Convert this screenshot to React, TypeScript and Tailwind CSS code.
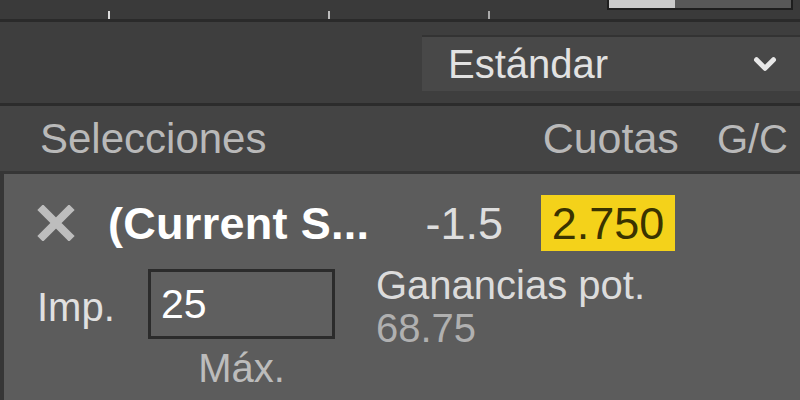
import { ChevronDown } from 'lucide-react'

// Bet slip panel, zoomed in: odds selector, header row and a single selection
export default function App() {
  return (
    <div className="flex h-[400px] w-[800px] flex-col overflow-hidden bg-[#3e3e3e] font-['Liberation_Sans',Arial,sans-serif] text-[40px] leading-none">
      {/* clipped tab strip at the very top */}
      <div className="flex h-[19px] items-end overflow-hidden bg-[#3a3a3a]">
        <div className="flex flex-1 items-end gap-[90px] pl-[30px] text-[#6a6a6a]">
          <span className="-mb-[2px] h-[10px] w-[80px] border-r-2 border-[#dcdcdc]"></span>
          <span className="-mb-[2px] h-[10px] w-[130px] border-r-2 border-[#bcbcbc]"></span>
          <span className="-mb-[2px] h-[10px] w-[70px] border-r-2 border-[#aaaaaa]"></span>
        </div>
        <div className="mr-[7px] flex h-[10px] w-[186px] self-start border-x-2 border-b-2 border-[#1e1e1e]">
          <div className="w-[66px] bg-[#cacaca]"></div>
          <div className="flex-1 bg-[#585858]"></div>
        </div>
      </div>
      <div className="h-[3px] bg-[#2a2a2a]"></div>

      {/* odds format selector */}
      <div className="flex h-[81px] items-center justify-end">
        <div className="flex h-[56px] w-[378px] items-center justify-between border-t-2 border-[#333333] bg-[#484848] pr-[18px] pl-[26px] text-[#e2e2e2]">
          <span>Estándar</span>
          <ChevronDown size={34} strokeWidth={3.5} className="text-[#e8e8e8]" />
        </div>
      </div>
      <div className="h-[3px] bg-[#2c2c2c]"></div>

      {/* column headers */}
      <div className="flex h-[65px] items-center bg-[#444444] text-[#b9b9b9]">
        <span className="pl-[40px] text-[42px]">Selecciones</span>
        <span className="ml-auto text-[43px]">Cuotas</span>
        <span className="mr-[12px] ml-[38px] text-[40px]">G/C</span>
      </div>

      {/* selection card */}
      <div className="flex flex-1 flex-col border-t-[3px] border-l-[4px] border-[#363636] bg-[#5c5c5c] pl-[33px]">
        <div className="mt-[21px] flex h-[56px] items-center">
          <svg width="38" height="36" viewBox="0 0 38 36" className="shrink-0">
            <path d="M6 5 L32 31 M32 5 L6 31" stroke="#bdbdbd" strokeWidth="8" strokeLinecap="square" />
          </svg>
          <span className="ml-[33px] text-[45px] font-bold tracking-[0.3px] text-white">(Current S...</span>
          <span className="ml-[56px] text-[45px] text-[#dedede]">-1.5</span>
          <span className="ml-[38px] flex h-[56px] w-[134px] items-center justify-center bg-[#f4d21a] text-[45px] text-[#3a3300]">
            2.750
          </span>
        </div>

        <div className="mt-[18px] flex items-start">
          <span className="mt-[18px] w-[111px] text-[#e0e0e0]">Imp.</span>
          <div className="flex flex-col items-center">
            <div className="flex h-[70px] w-[187px] items-center border-[3px] border-[#2b2b2b] bg-[#5f5f5f] pl-[10px] text-[41px] text-white">
              25
            </div>
            <span className="mt-[9px] text-[#bcbcbc]">Máx.</span>
          </div>
          <div className="ml-[41px] flex flex-col">
            <span className="-mt-[4px] text-[#dcdcdc]">Ganancias pot.</span>
            <span className="mt-[3px] text-[#b0b0b0]">68.75</span>
          </div>
        </div>
      </div>
    </div>
  )
}
